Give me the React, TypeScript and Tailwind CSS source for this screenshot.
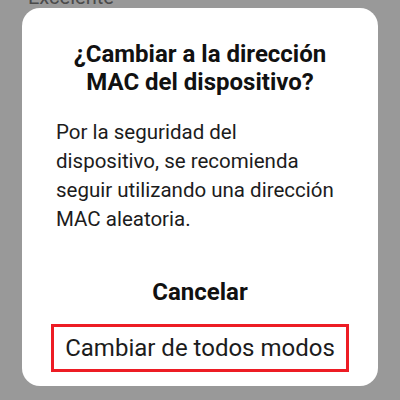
export default function App() {
  return (
    <div
      className="w-[400px] h-[400px] bg-[#999999] overflow-hidden flex flex-col"
      style={{ fontFamily: "Roboto, 'Noto Sans', sans-serif" }}
    >
      {/* Clipped list item behind the dialog */}
      <div className="h-[8px] overflow-hidden flex flex-col justify-end pl-[28px]">
        <span className="text-[20px] leading-[22px] text-[#4a4a4a]">Excelente</span>
      </div>

      <div className="mx-[22px] w-[356px] h-[378px] bg-white rounded-[18px] flex flex-col pt-[32px] px-[34px] pb-[14px]">
        <h2 className="-mx-[10px] text-center text-[24px] leading-[28px] font-bold text-[#111111]">
          ¿Cambiar a la dirección
          <br />
          MAC del dispositivo?
        </h2>

        <p className="mt-[22px] -mr-[10px] text-[20.5px] leading-[29px] text-[#1c1c1c]">
          Por la seguridad del
          <br />
          dispositivo, se recomienda
          <br />
          seguir utilizando una dirección
          <br />
          MAC aleatoria.
        </p>

        <button className="mt-[44px] text-center text-[24px] leading-[28px] font-bold text-[#111111]">
          Cancelar
        </button>

        <div className="mt-auto -mx-[5px] border-[3px] border-[#ed1c24] h-[48px] flex items-center justify-center">
          <span className="text-[24px] leading-[28px] text-[#1c1c1c] whitespace-nowrap">
            Cambiar de todos modos
          </span>
        </div>
      </div>
    </div>
  );
}
